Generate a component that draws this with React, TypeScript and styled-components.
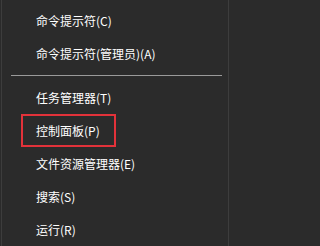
import React from "react";
import styled, { createGlobalStyle } from "styled-components";

const Global = createGlobalStyle`
  html, body { margin: 0; padding: 0; background: #2b2b2b; }
  #root { width: 230px; height: 246px; }
`;

const Menu = styled.div`
  box-sizing: border-box;
  width: 230px;
  height: 246px;
  background: #2b2b2b;
  border-left: 1px solid #2b2b2b;
  border-right: 1px solid #2b2b2b;
  box-shadow: inset 1px 0 0 #3d3d3d, inset -1px 0 0 #3d3d3d;
  padding-top: 4px;
  display: flex;
  flex-direction: column;
  font-family: "Noto Sans CJK SC", "Microsoft YaHei", sans-serif;
  font-size: 12px;
  color: #ffffff;
`;

const Item = styled.div`
  position: relative;
  height: 33px;
  display: flex;
  align-items: center;
  padding-left: 35px;
  white-space: nowrap;
  line-height: 1;
`;

const Mark = styled.div`
  position: absolute;
  left: 20px;
  top: 0px;
  width: 95px;
  height: 33px;
  box-sizing: border-box;
  border: 2px solid #e3323a;
  pointer-events: none;
`;

const Separator = styled.div`
  height: 11px;
  display: flex;
  align-items: center;
  padding: 0 7px 0 10px;
  &::after {
    content: "";
    flex: 1;
    height: 1px;
    background: #9a9a9a;
  }
`;

type Entry = { label: string; marked?: boolean } | "sep";

const entries: Entry[] = [
  { label: "命令提示符(C)" },
  { label: "命令提示符(管理员)(A)" },
  "sep",
  { label: "任务管理器(T)" },
  { label: "控制面板(P)", marked: true },
  { label: "文件资源管理器(E)" },
  { label: "搜索(S)" },
  { label: "运行(R)" },
];

export default function App() {
  return (
    <>
      <Global />
      <Menu>
        {entries.map((e, i) =>
          e === "sep" ? (
            <Separator key={i} />
          ) : (
            <Item key={i}>
              {e.label}
              {e.marked && <Mark />}
            </Item>
          )
        )}
      </Menu>
    </>
  );
}
